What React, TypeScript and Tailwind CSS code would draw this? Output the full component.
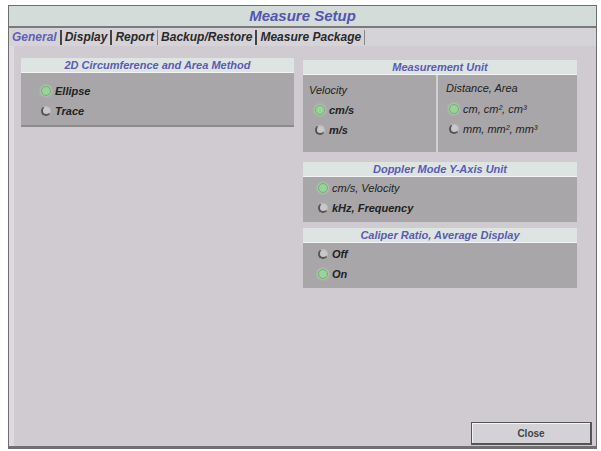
import React from "react";

const font = { fontFamily: '"Liberation Sans", Arial, sans-serif' };

function Radio({ on }: { on: boolean }) {
  return on ? (
    <span className="inline-block w-[10px] h-[10px] rounded-full bg-[#9ad39a] border border-[#6fae6f] shadow-[0_0_3px_#b9f0b9]" />
  ) : (
    <span className="inline-block w-[10px] h-[10px] rounded-full bg-[#c9c7c9] border-l-2 border-b-2 border-[#555] border-t border-r border-t-[#bbb] border-r-[#bbb]" />
  );
}

function Opt({ on, label }: { on: boolean; label: React.ReactNode }) {
  return (
    <div className="flex items-center gap-[4px] h-[20px] text-[11px] font-bold italic text-[#222]">
      <Radio on={on} />
      <span>{label}</span>
    </div>
  );
}

function Header({ children }: { children: React.ReactNode }) {
  return (
    <div className="h-[15px] bg-[#dde4e1] border-b border-[#f2f4f3] flex items-center justify-center text-[11px] font-bold italic text-[#5a5ab8]">
      {children}
    </div>
  );
}

export default function App() {
  return (
    <div style={font} className="w-[601px] h-[451px] bg-white pl-[8px] pt-[5px] pr-[4px] pb-[2px] flex">
      <div className="flex-1 flex flex-col border border-[#6e6e6e] border-b-[3px] border-b-[#707070] bg-[#cfcbd0]">
        <div className="h-[22px] bg-[#d3dcd8] border-b-2 border-[#7a7a7a] flex items-center justify-center text-[15px] font-bold italic text-[#5454b4]">
          Measure Setup
        </div>
        <div className="h-[18px] bg-[#d5d3d7] flex items-center pl-[3px] text-[12px] font-bold italic text-[#2a2a2a]">
          <span className="text-[#6060b8] pr-[3px]">General</span>
          <span className="border-l-2 border-[#444] h-[15px] flex items-center px-[3px]">Display</span>
          <span className="border-l-2 border-[#444] h-[15px] flex items-center px-[3px]">Report</span>
          <span className="border-l border-[#888] h-[15px] flex items-center px-[3px]">Backup/Restore</span>
          <span className="border-l-2 border-[#444] h-[15px] flex items-center px-[3px]">Measure Package</span>
          <span className="border-l border-[#888] h-[15px]" />
        </div>
        <div className="flex-1 flex flex-col border-l-[5px] border-[#dcdadd]">
          <div className="flex pl-[7px] pt-[12px] gap-[9px]">
            <div className="w-[273px]">
              <Header>2D Circumference and Area Method</Header>
              <div className="h-[54px] bg-[#a8a6a9] border-b-2 border-[#8c8a8c] pl-[20px] pt-[8px]">
                <Opt on label="Ellipse" />
                <Opt on={false} label="Trace" />
              </div>
            </div>
            <div className="w-[274px] pt-[2px] flex flex-col gap-[10px]">
              <div>
                <Header>Measurement Unit</Header>
                <div className="h-[77px] bg-[#a8a6a9] flex">
                  <div className="w-[135px] border-r-2 border-[#d0ced1] pl-[6px] pt-[5px]">
                    <div className="h-[20px] flex items-center text-[11px] italic text-[#222]">Velocity</div>
                    <div className="pl-[6px]">
                      <Opt on label="cm/s" />
                      <Opt on={false} label="m/s" />
                    </div>
                  </div>
                  <div className="flex-1 pl-[8px] pt-[3px]">
                    <div className="h-[20px] flex items-center text-[11px] italic text-[#222]">Distance, Area</div>
                    <div className="pl-[3px] pt-[1px]">
                      <Opt on label={<span className="font-normal">cm, cm², cm³</span>} />
                      <Opt on={false} label={<span className="font-normal">mm, mm², mm³</span>} />
                    </div>
                  </div>
                </div>
              </div>
              <div>
                <Header>Doppler Mode Y-Axis Unit</Header>
                <div className="h-[45px] bg-[#a8a6a9] pl-[15px] pt-[1px]">
                  <Opt on label={<span className="font-normal">cm/s, Velocity</span>} />
                  <Opt on={false} label="kHz, Frequency" />
                </div>
              </div>
              <div className="-mt-[4px]">
                <Header>Caliper Ratio, Average Display</Header>
                <div className="h-[45px] bg-[#a8a6a9] pl-[15px] pt-[1px]">
                  <Opt on={false} label="Off" />
                  <Opt on label="On" />
                </div>
              </div>
            </div>
          </div>
          <div className="flex-1" />
          <div className="flex justify-end pr-[4px] pb-[1px]">
            <div className="w-[121px] h-[23px] bg-[#d4d2d6] border border-[#555] border-r-2 border-b-2 shadow-[inset_1px_1px_0_#f4f4f4] flex items-center justify-center text-[10px] font-bold text-[#444]">
              Close
            </div>
          </div>
        </div>
      </div>
    </div>
  );
}
